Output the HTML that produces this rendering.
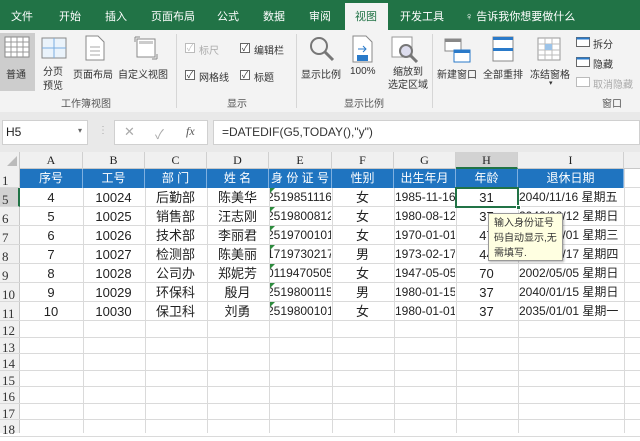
<!DOCTYPE html>
<html><head><meta charset="utf-8">
<style>
*{margin:0;padding:0;box-sizing:border-box}
body{width:640px;height:433px;overflow:hidden;background:#fff;position:relative;font-family:"Liberation Sans","Noto Sans CJK SC",sans-serif;color:#222}
.a{position:absolute}
.tab{position:absolute;top:8px;color:#fff;font-size:11px}
.rb{font-size:10px;color:#333;position:absolute;white-space:nowrap}
.grp{font-size:10px;color:#555;position:absolute;top:95px}
.sep{position:absolute;top:34px;width:1px;height:74px;background:#d6d6d6}
.cb{position:absolute;width:10px;height:10px;border:1px solid #666;background:#fff;font-size:9px;line-height:8px;text-align:center;color:#333}
.c{position:absolute;text-align:center;font-size:12px;white-space:nowrap;overflow:hidden;line-height:19px}
</style></head><body>
<div class="a" style="left:0;top:0;width:640px;height:30px;background:#217346"></div>
<div class="tab" style="left:11px">文件</div>
<div class="tab" style="left:59px">开始</div>
<div class="tab" style="left:105px">插入</div>
<div class="tab" style="left:151px">页面布局</div>
<div class="tab" style="left:217px">公式</div>
<div class="tab" style="left:263px">数据</div>
<div class="tab" style="left:309px">审阅</div>
<div class="a" style="left:345px;top:3px;width:43px;height:28px;background:#f3f3f3"></div>
<div class="tab" style="left:355px;color:#217346">视图</div>
<div class="tab" style="left:400px">开发工具</div>
<div class="tab" style="left:465px">♀ 告诉我你想要做什么</div>
<div class="a" style="left:0;top:30px;width:640px;height:82px;background:#f3f3f3"></div>
<div class="a" style="left:0;top:112px;width:640px;height:41px;background:#e9e9e9"></div>
<div class="a" style="left:0;top:33px;width:35px;height:58px;background:#cdcdcd"></div>
<svg class="a" style="left:4px;top:36px" width="26" height="22"><rect x="1" y="1" width="24" height="20" fill="#fff" stroke="#888"/><path d="M1 6H25M1 11H25M1 16H25M7 1V21M13 1V21M19 1V21" stroke="#999"/></svg>
<div class="rb" style="left:6px;top:66px">普通</div>
<svg class="a" style="left:41px;top:37px" width="26" height="22"><rect x="1" y="1" width="24" height="20" fill="#eaf3fb" stroke="#888"/><path d="M13 1V21M1 11H25" stroke="#7aaee0"/></svg>
<div class="rb" style="left:43px;top:66px;line-height:14px">分页<br>预览</div>
<svg class="a" style="left:85px;top:35px" width="20" height="26"><path d="M1 1H13L19 7V25H1Z" fill="#fff" stroke="#888"/><path d="M5 12H15M5 16H15M5 20H15" stroke="#aaa"/></svg>
<div class="rb" style="left:73px;top:66px">页面布局</div>
<svg class="a" style="left:134px;top:36px" width="24" height="24"><rect x="3" y="3" width="18" height="18" fill="#fff" stroke="#888"/><rect x="5" y="5" width="14" height="3" fill="#ccc"/><path d="M1 1V6M1 1H6M23 23V18M23 23H18" stroke="#888"/></svg>
<div class="rb" style="left:118px;top:66px">自定义视图</div>
<div class="grp" style="left:61px">工作簿视图</div>
<div class="sep" style="left:176px"></div>
<div class="cb" style="left:185px;top:43px;border-color:#bbb;color:#bbb">✓</div><div class="rb" style="left:199px;top:42px;color:#aaa">标尺</div>
<div class="cb" style="left:240px;top:43px">✓</div><div class="rb" style="left:254px;top:42px">编辑栏</div>
<div class="cb" style="left:185px;top:70px">✓</div><div class="rb" style="left:199px;top:69px">网格线</div>
<div class="cb" style="left:240px;top:70px">✓</div><div class="rb" style="left:254px;top:69px">标题</div>
<div class="grp" style="left:227px">显示</div>
<div class="sep" style="left:296px"></div>
<svg class="a" style="left:309px;top:36px" width="26" height="26"><circle cx="10" cy="10" r="8" fill="none" stroke="#777" stroke-width="2"/><path d="M16 16L24 24" stroke="#777" stroke-width="3"/></svg>
<div class="rb" style="left:301px;top:66px">显示比例</div>
<svg class="a" style="left:352px;top:35px" width="22" height="28"><path d="M1 1H14L20 7V27H1Z" fill="#fff" stroke="#888"/><path d="M6 14H14M11 11L14 14L11 17" stroke="#2a7ac9" fill="none"/><rect x="5" y="20" width="11" height="6" fill="#2a7ac9"/></svg>
<div class="rb" style="left:350px;top:66px">100%</div>
<svg class="a" style="left:391px;top:36px" width="28" height="28"><rect x="1" y="1" width="20" height="20" fill="#fff" stroke="#999"/><circle cx="15" cy="15" r="6" fill="#dde" stroke="#777" stroke-width="2"/><path d="M19 19L26 26" stroke="#777" stroke-width="3"/></svg>
<div class="rb" style="left:388px;top:66px;line-height:13px;text-align:center">缩放到<br>选定区域</div>
<div class="grp" style="left:344px">显示比例</div>
<div class="sep" style="left:432px"></div>
<svg class="a" style="left:444px;top:38px" width="28" height="26"><rect x="1" y="1" width="16" height="12" fill="#fff" stroke="#888"/><rect x="1" y="1" width="16" height="3" fill="#888"/><rect x="10" y="12" width="16" height="12" fill="#fff" stroke="#2a7ac9"/><rect x="10" y="12" width="16" height="3" fill="#2a7ac9"/></svg>
<div class="rb" style="left:437px;top:66px">新建窗口</div>
<svg class="a" style="left:492px;top:36px" width="22" height="26"><rect x="1" y="1" width="20" height="24" fill="#fff" stroke="#888"/><rect x="1" y="1" width="20" height="3" fill="#2a7ac9"/><rect x="1" y="12" width="20" height="3" fill="#2a7ac9"/></svg>
<div class="rb" style="left:483px;top:66px">全部重排</div>
<svg class="a" style="left:537px;top:37px" width="24" height="24"><rect x="1" y="1" width="22" height="22" fill="#fff" stroke="#999"/><path d="M1 7H23M1 13H23M1 18H23M8 1V23M15 1V23" stroke="#bbb"/><rect x="8" y="7" width="7" height="6" fill="#9cc3e8"/></svg>
<div class="rb" style="left:530px;top:66px">冻结窗格</div>
<div class="rb" style="left:549px;top:79px;font-size:7px">▾</div>
<svg class="a" style="left:576px;top:37px" width="14" height="10"><rect x=".5" y=".5" width="13" height="9" fill="#fff" stroke="#666"/><rect x=".5" y=".5" width="13" height="2" fill="#2a7ac9"/></svg><div class="rb" style="left:593px;top:36px">拆分</div>
<svg class="a" style="left:576px;top:57px" width="14" height="10"><rect x=".5" y=".5" width="13" height="9" fill="#fff" stroke="#666"/><rect x=".5" y=".5" width="13" height="2" fill="#2a7ac9"/></svg><div class="rb" style="left:593px;top:56px">隐藏</div>
<svg class="a" style="left:576px;top:77px" width="14" height="10"><rect x=".5" y=".5" width="13" height="9" fill="#fff" stroke="#bbb"/></svg><div class="rb" style="left:593px;top:76px;color:#aaa">取消隐藏</div>
<div class="grp" style="left:602px">窗口</div>
<div class="a" style="left:2px;top:120px;width:86px;height:25px;background:#fff;border:1px solid #d0d0d0"></div>
<div class="a" style="left:6px;top:125px;font-size:12px">H5</div>
<div class="a" style="left:78px;top:126px;font-size:8px;color:#666">▾</div>
<div class="a" style="left:98px;top:125px;font-size:10px;color:#aaa">⋮</div>
<div class="a" style="left:114px;top:120px;width:94px;height:25px;background:#fff;border:1px solid #d0d0d0"></div>
<div class="a" style="left:124px;top:124px;font-size:13px;color:#aaa">✕</div>
<div class="a" style="left:155px;top:124px;font-size:13px;color:#aaa">✓</div>
<div class="a" style="left:186px;top:124px;font-size:12px;color:#555;font-style:italic;font-family:'Liberation Serif',serif">fx</div>
<div class="a" style="left:213px;top:120px;width:427px;height:25px;background:#fff;border:1px solid #d0d0d0"></div>
<div class="a" style="left:222px;top:125px;font-size:12px;color:#333">=DATEDIF(G5,TODAY(),"y")</div>
<div id="g"></div>
<script>
var X=[20,83,145,207,269,332,394,456,518,624,640],L="ABCDEFGHI";
var h='';
h+='<div class="a" style="left:0;top:152px;width:640px;height:17px;background:#f0f0f0;border-bottom:1px solid #c8c8c8"></div>';
h+='<div class="a" style="left:0;top:152px;width:20px;height:281px;background:#f0f0f0;border-right:1px solid #c8c8c8"></div>';
h+='<svg class="a" style="left:6px;top:156px" width="12" height="11"><path d="M11 0V10H1Z" fill="#bbb"/></svg>';
for(var i=0;i<9;i++){var bg=i==7?'background:#d2d2d2;border-bottom:2px solid #217346;':'';
h+='<div class="c" style="left:'+X[i]+'px;top:152px;width:'+(X[i+1]-X[i])+'px;height:17px;line-height:17px;font-family:\'Liberation Serif\',serif;font-size:12px;border-right:1px solid #d0d0d0;'+bg+'">'+L[i]+'</div>';}
var R=[['1',169,19]];for(var r=5;r<=11;r++)R.push([''+r,188+(r-5)*19,19]);
for(var r=12;r<=18;r++)R.push([''+r,321+(r-12)*16.5,16.5]);
R.forEach(function(q){h+='<div class="a" style="left:0;top:'+q[1]+'px;width:20px;height:'+q[2]+'px;font-family:\'Liberation Serif\',serif;font-size:13px;color:#333;padding-left:2px;line-height:'+(q[2]+4)+'px;border-bottom:1px solid #d8d8d8;'+(q[0]=='5'?'background:#d2d2d2;border-right:2px solid #217346':'')+'">'+q[0]+'</div>';
h+='<div class="a" style="left:20px;top:'+(q[1]+q[2]-1)+'px;width:620px;height:1px;background:#dadada"></div>';});
for(var i=1;i<10;i++)h+='<div class="a" style="left:'+X[i]+'px;top:169px;width:1px;height:264px;background:#dadada"></div>';
h+='<div class="a" style="left:20px;top:169px;width:604px;height:19px;background:#1f74c0"></div>';
var H=['序号','工号','部 门','姓 名','身 份 证 号','性别','出生年月','年龄','退休日期'];
for(var i=0;i<9;i++)h+='<div class="c" style="left:'+X[i]+'px;top:169px;width:'+(X[i+1]-X[i])+'px;height:19px;color:#fff;border-right:1px solid #7fb0e0">'+H[i]+'</div>';
var D=[['4','10024','后勤部','陈美华','2519851116','女','1985-11-16','31','2040/11/16 星期五'],
['5','10025','销售部','汪志刚','2519800812','女','1980-08-12','37','2040/08/12 星期日'],
['6','10026','技术部','李丽君','2519700101','女','1970-01-01','47','2030/01/01 星期三'],
['7','10027','检测部','陈美丽','1719730217','男','1973-02-17','44','2033/02/17 星期四'],
['8','10028','公司办','郑妮芳','0119470505','女','1947-05-05','70','2002/05/05 星期日'],
['9','10029','环保科','殷月','2519800115','男','1980-01-15','37','2040/01/15 星期日'],
['10','10030','保卫科','刘勇','2519800101','女','1980-01-01','37','2035/01/01 星期一']];
D.forEach(function(d,r){var y=188+r*19;for(var i=0;i<9;i++){var al=(i==6||i==8)?'text-align:left;padding-left:1px;font-size:12px;':'font-size:13px;';
if(i==4)h+='<div class="c" style="left:270px;top:'+y+'px;width:61px;height:18px;line-height:19px;font-size:12px"><span style="position:absolute;left:-3px;top:0">'+d[i]+'</span></div>';
else h+='<div class="c" style="left:'+X[i]+'px;top:'+y+'px;width:'+(X[i+1]-X[i]-1)+'px;height:18px;line-height:19px;'+al+'">'+d[i]+'</div>';}
h+='<svg class="a" style="left:270px;top:'+y+'px" width="5" height="5"><path d="M0 0H5L0 5Z" fill="#2e8b3e"/></svg>';});
h+='<div class="a" style="left:455px;top:187px;width:64px;height:21px;border:2px solid #217346"></div>';
h+='<div class="a" style="left:516px;top:205px;width:5px;height:5px;background:#217346;border:1px solid #fff"></div>';
h+='<div class="a" style="left:488px;top:213px;width:75px;height:48px;background:#ffffe1;border:1px solid #999;box-shadow:1px 1px 2px rgba(0,0,0,.3);font-size:10px;line-height:15px;color:#333;padding:2px 0 0 5px">输入身份证号<br>码自动显示,无<br>需填写.</div>';
document.getElementById('g').innerHTML=h;
</script>
</body></html>
